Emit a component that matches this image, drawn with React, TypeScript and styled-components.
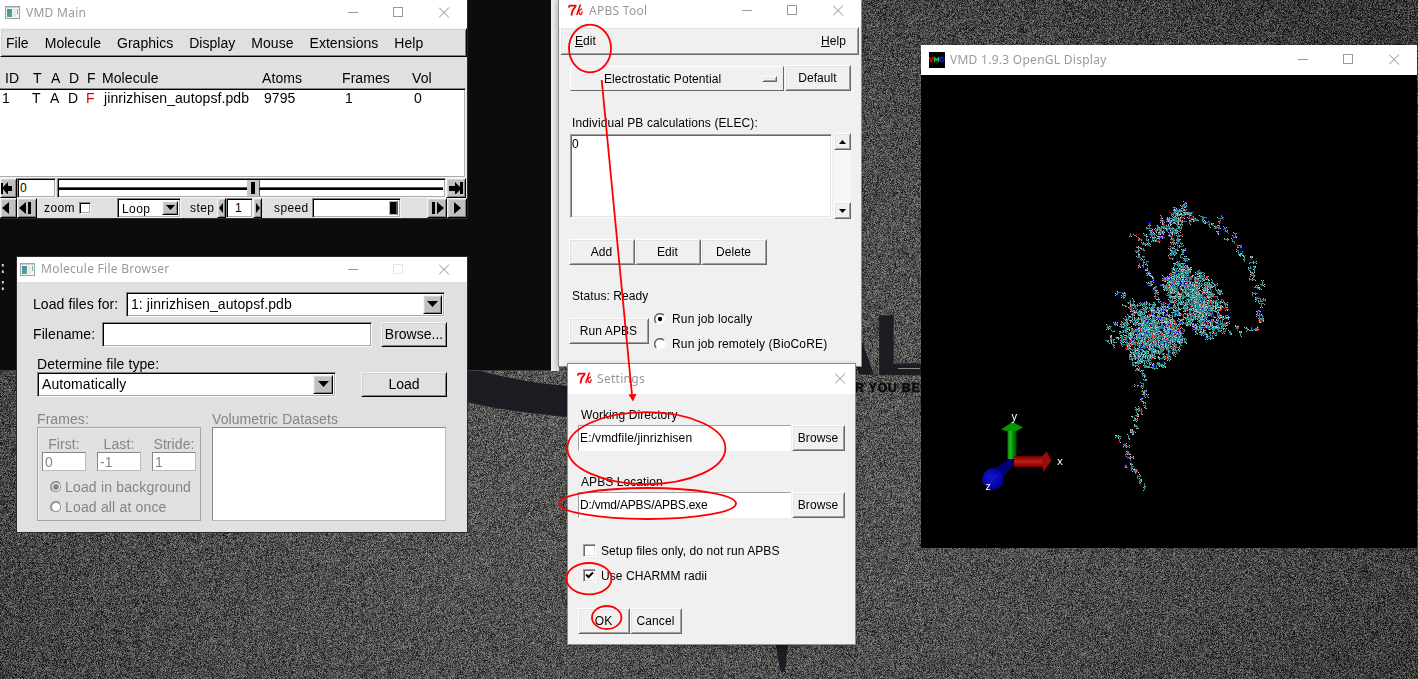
import React, { useLayoutEffect, useRef } from "react";
import styled, { createGlobalStyle, css } from "styled-components";

const GlobalStyle = createGlobalStyle`
  * { box-sizing: border-box; }
  body { margin: 0; background: #454545; overflow: hidden; }
`;

/* ---------- seeded random ---------- */
function makeRandom(seed: number) {
  let s = seed;
  return () => {
    s = (s + 0x6d2b79f5) | 0;
    let t = Math.imul(s ^ (s >>> 15), 1 | s);
    t = (t + Math.imul(t ^ (t >>> 7), 61 | t)) ^ t;
    return ((t ^ (t >>> 14)) >>> 0) / 4294967296;
  };
}

/* ---------- desktop ---------- */
const Desktop = styled.div`
  position: relative;
  width: 1418px;
  height: 679px;
  overflow: hidden;
  font-family: "Liberation Sans", Arial, sans-serif;
  color: #000;
  white-space: nowrap;
`;

const NoiseCanvas = styled.canvas`
  display: block;
`;

const WallpaperArt = styled.svg`
  position: absolute;
  inset: 0;
`;

const Console = styled.div`
  position: absolute;
  left: 0;
  top: 0;
  width: 551px;
  height: 371px;
  padding-top: 261px;
  background: #0c0c0c;
  border-bottom: 1px solid #3c3c3c;
  color: #d8d8d8;
  font: 16px/17px "Liberation Mono", monospace;
  text-indent: -2px;
`;

const BackWindowEdge = styled.div`
  position: absolute;
  left: 551px;
  top: 0;
  width: 8px;
  height: 371px;
  background: linear-gradient(90deg, #f0f0f0, #dedede);
`;

const Annotations = styled.svg`
  position: absolute;
  inset: 0;
  pointer-events: none;
`;

/* ---------- window chrome ---------- */
const Window = styled.section<{ $x: number; $y: number; $w: number; $h: number; $face: string }>`
  position: absolute;
  left: ${(p) => p.$x}px;
  top: ${(p) => p.$y}px;
  width: ${(p) => p.$w}px;
  height: ${(p) => p.$h}px;
  display: flex;
  flex-direction: column;
  background: ${(p) => p.$face};
`;

const FltkWindow = styled(Window)`
  font-size: 14px;
  line-height: 16px;
  letter-spacing: 0.08px;
  box-shadow: 0 0 0 1px #2b2b2b;
`;

const TkWindow = styled(Window)`
  font-size: 12px;
  line-height: 14px;
  letter-spacing: 0.08px;
  box-shadow: 0 0 0 1px #8f8f8f, 0 2px 7px rgba(0, 0, 0, 0.35);
`;

const TitleBar = styled.header<{ $h: number; $left: number; $lift?: number }>`
  flex: none;
  display: flex;
  align-items: center;
  height: ${(p) => p.$h}px;
  padding-left: ${(p) => p.$left}px;
  padding-bottom: ${(p) => p.$lift ?? 0}px;
  background: #fff;
`;

const Title = styled.h1<{ $ls?: number; $ml?: number }>`
  flex: 1;
  margin: 0 0 0 ${(p) => p.$ml ?? 6}px;
  font: 400 12px/16px "Noto Sans", "Open Sans", sans-serif;
  letter-spacing: ${(p) => p.$ls ?? 0.27}px;
  color: #999;
`;

const ControlButton = styled.span<{ $w?: number; $shift?: number }>`
  display: flex;
  justify-content: center;
  width: ${(p) => p.$w ?? 46}px;
  padding-left: ${(p) => p.$shift ?? 0}px;
`;

function Controls({ only, dimMax, closeW }: { only?: boolean; dimMax?: boolean; closeW?: number }) {
  return (
    <>
      {!only && (
        <ControlButton $shift={3}>
          <svg width="11" height="11"><path d="M0 5.500h10" stroke="#999" /></svg>
        </ControlButton>
      )}
      {!only && (
        <ControlButton $shift={1}>
          <svg width="11" height="11">
            <rect x=".5" y=".5" width="9" height="9" fill="none" stroke={dimMax ? "#e6e6e6" : "#999"} />
          </svg>
        </ControlButton>
      )}
      <ControlButton $w={closeW} $shift={closeW ? 0 : 1}>
        <svg width="11" height="11"><path d="M0 .5l10 10M10 .5l-10 10" stroke="#8c8c8c" fill="none" /></svg>
      </ControlButton>
    </>
  );
}

const AppIcon = () => (
  <svg width="15" height="13">
    <defs>
      <linearGradient id="appGlow" x1="0" y1="0" x2="0.4" y2="1">
        <stop offset="0" stopColor="#4f7fc0" />
        <stop offset="1" stopColor="#4fae78" />
      </linearGradient>
    </defs>
    <rect x=".5" y=".5" width="14" height="12" fill="#f2f4f5" stroke="#9aa3a8" />
    <path d="M1 1.5h13" stroke="#c7ced3" />
    <rect x="2" y="3" width="5" height="8" fill="url(#appGlow)" />
    <rect x="8" y="3" width="3" height="8" fill="#e4e8ea" />
    <rect x="12" y="3" width="1" height="5" fill="#7fae9d" />
  </svg>
);

const TkIcon = () => (
  <svg width="16" height="13" fill="none" stroke="#f00000">
    <path d="M.6 3.600L1.600 1.700H8.400" strokeWidth="1.700" />
    <path d="M7.800 2L4.600 6.500L3.400 11.500" strokeWidth="1.800" />
    <path d="M12.400 .6L8.800 11" strokeWidth="1.500" />
    <path d="M9.500 7.600L14 4.800M10 7.200c1.700 0 1 3.300 2.300 3.300s2.200-1.600 1.600-3.300" strokeWidth="1.300" />
  </svg>
);

const VmdIcon = () => (
  <svg width="16" height="16">
    <rect width="16" height="16" />
    <path d="M.5 5l1.500 4.500L4 5" stroke="#f00010" strokeWidth="1.300" fill="none" />
    <path d="M5.500 10V6l2 2 2-2v4" stroke="#00e020" strokeWidth="1.400" fill="none" />
    <path d="M11.500 5.500v4h1.800l1.500-1v-2l-1.500-1z" stroke="#1010e8" strokeWidth="1.300" fill="none" />
  </svg>
);

/* ---------- FLTK widgets ---------- */
const fltkDown = css`
  background: #fff;
  border: 1px solid;
  border-color: #848484 #f4f4f4 #f4f4f4 #848484;
  box-shadow: inset 1px 1px #000, inset -1px -1px #ababab;
`;
const fltkUp = css`
  border: 1px solid;
  border-color: #f4f4f4 #000 #000 #f4f4f4;
  box-shadow: inset 1px 1px #d2d2d2, inset -1px -1px #848484;
`;

const MainMenu = styled.nav`
  flex: none;
  display: flex;
  align-items: center;
  gap: 16px;
  width: 467px;
  height: 29px;
  padding: 0 0 0 5px;
  letter-spacing: 0.03px;
  ${fltkUp}
`;

const HeaderRow = styled.div`
  flex: none;
  display: grid;
  grid-template-columns: 28px 18px 18px 18px 15px 160px 80px 70px 1fr;
  align-items: end;
  height: 31px;
  padding: 0 0 2px 5px;
`;

const MoleculeList = styled.div`
  flex: none;
  width: 468px;
  height: 90px;
  margin-left: -2px;
  padding: 1px 0 0 3px;
  ${fltkDown}
`;

const MoleculeRow = styled.div`
  display: grid;
  grid-template-columns: 30px 18px 18px 18px 18px 160px 81px 69px 1fr;
`;

const FixedFlag = styled.span`
  color: #e00000;
`;

const PlayRow = styled.div`
  flex: none;
  display: flex;
  align-items: center;
  height: 20px;
  font-size: 12px;
  line-height: 14px;
  letter-spacing: 0.4px;
`;

const IconButton = styled.button<{ $w: number; $cut?: number }>`
  display: flex;
  align-items: center;
  justify-content: center;
  flex: none;
  width: ${(p) => p.$w}px;
  height: 20px;
  padding: 0 ${(p) => p.$cut ?? 0}px 0 0;
  background: #c0c0c0;
  ${fltkUp}
`;

const SmallInput = styled.div<{ $w: number; $pl: number }>`
  flex: none;
  width: ${(p) => p.$w}px;
  height: 20px;
  padding: 2px 0 0 ${(p) => p.$pl}px;
  ${fltkDown}
`;

const FrameSlider = styled.div`
  flex: none;
  display: flex;
  align-items: center;
  width: 389px;
  height: 20px;
  margin-left: 1px;
  padding: 0 2px 0 1px;
  ${fltkDown}
`;
const Track = styled.i<{ $w: number }>`
  width: ${(p) => p.$w}px;
  height: 3px;
  background: #000;
  border-top: 1px solid #555;
`;
const Knob = styled.i`
  width: 12px;
  height: 16px;
  background: #000;
  border: 3px solid #c8c8c8;
  border-width: 2px 4px 2px 4px;
  box-shadow: 1px 0 #555;
`;

const SpeedSlider = styled.div`
  flex: none;
  display: flex;
  justify-content: flex-end;
  width: 89px;
  height: 20px;
  margin-left: 3px;
  padding: 2px;
  ${fltkDown}
`;
const SpeedKnob = styled.i`
  width: 9px;
  background: #000;
  border: 1px solid #b8b8b8;
  border-right: 2px solid #555;
`;

const PlayLabel = styled.span<{ $w: number; $pl: number }>`
  flex: none;
  width: ${(p) => p.$w}px;
  padding-left: ${(p) => p.$pl}px;
`;

const ZoomBox = styled.i`
  width: 12px;
  height: 12px;
  margin-right: 26px;
  ${fltkDown}
`;

const Choice = styled.div<{ $w: number; $h: number }>`
  flex: none;
  display: flex;
  align-items: center;
  justify-content: space-between;
  width: ${(p) => p.$w}px;
  height: ${(p) => p.$h}px;
  padding: 2px 2px 2px 4px;
  ${fltkDown}
`;
const ChoiceText = styled.span`
  padding-bottom: 1px;
`;
const LoopText = styled.span`
  padding-top: 1px;
`;
const ChoiceArrow = styled.span<{ $w: number }>`
  display: flex;
  align-items: center;
  justify-content: center;
  align-self: stretch;
  width: ${(p) => p.$w}px;
  background: #c0c0c0;
  ${fltkUp}
`;
const Down = ({ s = 11 }: { s?: number }) => (
  <svg width={s} height={s / 2 + 1}><path d={`M0 0h${s}l-${s / 2} ${s / 2 + 0.5}z`} /></svg>
);

const BrowserBody = styled.div`
  display: flex;
  flex-direction: column;
  padding: 10px 0 0 16px;
`;
const BrowserRow = styled.div<{ $mb: number; $indent?: number }>`
  display: flex;
  align-items: center;
  height: 25px;
  margin-bottom: ${(p) => p.$mb}px;
  padding-left: ${(p) => p.$indent ?? 0}px;
`;
const FieldLabel = styled.label<{ $w: number }>`
  width: ${(p) => p.$w}px;
  padding-bottom: 2px;
`;
const FilenameInput = styled.div`
  width: 270px;
  height: 25px;
  ${fltkDown}
`;
const FltkButton = styled.button<{ $w: number; $ml: number }>`
  width: ${(p) => p.$w}px;
  height: 25px;
  margin: 0 0 0 ${(p) => p.$ml}px;
  padding: 0 0 2px;
  background: #e0e0e0;
  font: 14px/16px "Liberation Sans", Arial, sans-serif;
  text-align: center;
  ${fltkUp}
`;
const TypeLabel = styled.div`
  height: 16px;
  margin: -1px 0 0 4px;
`;

const DisabledArea = styled.div`
  display: flex;
  gap: 11px;
  margin: 14px 0 0 4px;
  color: #858585;
`;
const Labelled = styled.div`
  display: flex;
  flex-direction: column;
`;
const FramesGroup = styled.div`
  display: flex;
  flex-direction: column;
  width: 164px;
  height: 94px;
  padding: 8px 0 0 4px;
  border: 1px solid #a4a4a4;
  box-shadow: inset 1px 1px #f0f0f0;
`;
const RangeFields = styled.div`
  display: flex;
  gap: 11px;
  text-align: center;
`;
const RangeInput = styled.div`
  width: 44px;
  height: 19px;
  margin-bottom: 6px;
  padding: 1px 0 0 2px;
  background: #fff;
  border: 1px solid #bcbcbc;
  border-color: #858585 #bcbcbc #bcbcbc #858585;
  text-align: left;
`;
const FltkRadioRow = styled.div`
  display: flex;
  align-items: center;
  gap: 3px;
  height: 20px;
  padding-left: 8px;
  letter-spacing: 0.17px;
`;
const VolumeList = styled.div`
  width: 234px;
  height: 94px;
  background: #fff;
  border: 1px solid #bcbcbc;
  border-color: #858585 #bcbcbc #bcbcbc #858585;
`;

/* ---------- Tk widgets ---------- */
const tkUp = css`
  background: #f0f0f0;
  border: 1px solid;
  border-color: #fff #696969 #696969 #fff;
  box-shadow: inset 1px 1px #e3e3e3, inset -1px -1px #a0a0a0;
`;
const TkMenu = styled.nav`
  display: flex;
  justify-content: space-between;
  align-items: center;
  height: 28px;
  margin: 0 2px 0 1px;
  padding: 0 12px 0 14px;
  ${tkUp}
`;
const TkButton = styled.button<{ $w: number }>`
  flex: none;
  width: ${(p) => p.$w}px;
  height: 26px;
  padding: 0 1px 0 0;
  font: 12px/14px "Liberation Sans", Arial, sans-serif;
  letter-spacing: 0.08px;
  text-align: center;
  ${tkUp}
`;
const ToolBody = styled.div`
  display: flex;
  flex-direction: column;
  padding: 10px 0 0 10px;
`;
const OptionRow = styled.div`
  display: flex;
  align-items: flex-start;
  gap: 1px;
  margin-left: 1px;
`;
const OptionMenu = styled.div`
  display: flex;
  align-items: center;
  justify-content: space-between;
  width: 214px;
  height: 25px;
  margin-top: 1px;
  padding: 0 6px 0 33px;
  background: #f0f0f0;
  border: 1px solid;
  border-color: #fff #696969 #696969 #fff;
`;
const OptionMark = styled.i`
  width: 15px;
  height: 6px;
  ${tkUp}
`;
const CalcLabel = styled.div`
  margin: 25px 0 3px 3px;
  letter-spacing: 0.11px;
`;
const CalcArea = styled.div`
  display: flex;
  gap: 2px;
  margin-left: 1px;
`;
const CalcList = styled.div`
  width: 262px;
  height: 84px;
  margin-top: 1px;
  padding: 2px 0 0 1px;
  background: #fff;
  border: 1px solid;
  border-color: #a0a0a0 #fff #fff #a0a0a0;
  box-shadow: inset 1px 1px #696969, inset -1px -1px #e3e3e3;
`;
const ScrollBar = styled.div`
  display: flex;
  flex-direction: column;
  justify-content: space-between;
  width: 17px;
  height: 86px;
  background: #f6f6f6;
`;
const ScrollButton = styled.span`
  display: flex;
  align-items: center;
  justify-content: center;
  height: 17px;
  ${tkUp}
`;
const ActionRow = styled.div<{ $mt: number }>`
  display: flex;
  margin-top: ${(p) => p.$mt}px;
`;
const Status = styled.div`
  margin: 24px 0 0 3px;
`;
const RunArea = styled.div`
  display: flex;
  margin-top: 3px;
  gap: 5px;
`;
const RunButton = styled(TkButton)`
  margin: 12px 0 0 0;
`;
const RunOptions = styled.div`
  display: flex;
  flex-direction: column;
  letter-spacing: 0.15px;
`;
const TkOption = styled.label<{ $gap: number }>`
  display: flex;
  align-items: center;
  gap: ${(p) => p.$gap}px;
  height: 25px;
`;
const SettingsBody = styled.div`
  display: flex;
  flex-direction: column;
  padding: 14px 0 0 10px;
`;
const PathLabel = styled.div`
  margin: 0 0 3px 3px;
`;
const PathRow = styled.div<{ $mb: number }>`
  display: flex;
  gap: 1px;
  margin-bottom: ${(p) => p.$mb}px;
`;
const PathInput = styled.div<{ $ls?: number }>`
  width: 213px;
  height: 26px;
  padding: 5px 0 0 1px;
  background: #fff;
  border: 1px solid;
  border-color: #a0a0a0 #fff #fff #a0a0a0;
  letter-spacing: ${(p) => p.$ls ?? 0.13}px;
`;
const CheckBox = styled.i`
  display: flex;
  width: 13px;
  height: 13px;
  margin-left: 5px;
  background: #fff;
  border: 1px solid;
  border-color: #a0a0a0 #fff #fff #a0a0a0;
  box-shadow: inset 1px 1px #696969, inset -1px -1px #e3e3e3;
`;

function Radio({ on, dim }: { on?: boolean; dim?: boolean }) {
  return (
    <svg width="12" height="12">
      <circle cx="6" cy="6" r="5" fill="#fff" stroke="#fff" />
      <path d="M2.200 9.800A5.300 5.300 0 0 1 9.800 2.200" fill="none" stroke={dim ? "#999" : "#666"} strokeWidth="1.500" />
      {dim && <circle cx="6" cy="6" r="4.600" fill="none" stroke="#999" strokeWidth="1.200" />}
      {on && <circle cx="6" cy="6" r={dim ? 2.9 : 2.2} fill={dim ? "#858585" : "#000"} />}
    </svg>
  );
}

/* ---------- wallpaper ---------- */
function Wallpaper() {
  const ref = useRef<HTMLCanvasElement>(null);
  useLayoutEffect(() => {
    const ctx = ref.current?.getContext("2d");
    if (!ctx) return;
    const W = 1418;
    const H = 679;
    const rnd = makeRandom(7);
    const img = ctx.createImageData(W, H);
    for (let y = 0; y < H; y++) {
      for (let x = 0; x < W; x++) {
        const dx = (x - 640) / 900;
        const dy = (y - 420) / 620;
        const base = 85 - 30 * Math.min(1, dx * dx + dy * dy);
        const n = (rnd() + rnd() - 1) * 68;
        const v = Math.max(14, base + n);
        const i = (y * W + x) * 4;
        img.data[i] = v;
        img.data[i + 1] = v;
        img.data[i + 2] = v - 1;
        img.data[i + 3] = 255;
      }
    }
    ctx.putImageData(img, 0, 0);
  }, []);
  return (
    <>
      <NoiseCanvas ref={ref} width={1418} height={679} />
      <WallpaperArt width="1418" height="679">
        <path d="M467 371h14c30 8 60 13 88 15v31c-40-4-75-8-102-15z" fill="#1d1c23" />
        <path d="M775 640h14l-3 20-1 10q-3 4-5 0z" fill="#1d1c23" />
        <text x="814" y="374" fontSize="84" fontWeight="700" fill="#1d1c23" stroke="#1d1c23" strokeWidth="2.500">AL</text>
        <path d="M898 368.500h22" stroke="#8a8a86" />
        <text x="855" y="392" fontSize="12" fontWeight="700" letterSpacing="1" fill="#0c0c0e" stroke="#0c0c0e" strokeWidth=".6">R YOU BE</text>
      </WallpaperArt>
    </>
  );
}

/* ---------- molecule ---------- */
type Pt = [number, number];
const COLORS = ["#2f8c8c", "#b9b9b9", "#0808cc", "#cc0808", "#a8a810"];

function buildMolecule() {
  const rnd = makeRandom(42);
  const pixels = new Map<number, number>();
  const dot = (c: number, x: number, y: number, keep = 0) => {
    const key = Math.round(y) * 2000 + Math.round(x);
    if (pixels.has(key) && rnd() < keep) return;
    pixels.set(key, c);
  };
  const tip = () => {
    const r = rnd();
    return r < 0.66 ? 1 : r < 0.84 ? 2 : r < 0.993 ? 3 : 4;
  };
  const residue = (x: number, y: number, bonds: number) => {
    let cx = Math.round(x);
    let cy = Math.round(y);
    for (let i = 0; i < bonds; i++) {
      const dir = Math.floor(rnd() * 4);
      const dx = [1, -1, 0, 0][dir];
      const dy = [0, 0, 1, -1][dir];
      const len = 1 + Math.floor(rnd() * 3);
      for (let k = 0; k < len; k++) {
        dot(0, cx, cy);
        cx += dx;
        cy += dy;
      }
      dot(tip(), cx + dy, cy + dx, 0.25);
      if (rnd() < 0.45) dot(tip(), cx - dy, cy - dx, 0.25);
      if (rnd() < 0.35) {
        cx = Math.round(x);
        cy = Math.round(y);
      }
    }
  };
  const chain = (pts: Pt[], spread: number, step: number, bonds: number) => {
    for (let i = 0; i + 1 < pts.length; i++) {
      const [ax, ay] = pts[i];
      const [bx, by] = pts[i + 1];
      const n = Math.max(1, Math.round(Math.hypot(bx - ax, by - ay) / step));
      for (let k = 0; k < n; k++) {
        const t = k / n;
        residue(ax + (bx - ax) * t + (rnd() - 0.5) * spread, ay + (by - ay) * t + (rnd() - 0.5) * spread, bonds);
      }
    }
  };
  const blob = (cx: number, cy: number, rx: number, ry: number, rot: number, n: number) => {
    for (let i = 0; i < n; i++) {
      const a = rnd() * Math.PI * 2;
      const r = Math.pow(rnd(), 0.75);
      const px = Math.cos(a) * r * rx;
      const py = Math.sin(a) * r * ry;
      residue(cx + px * Math.cos(rot) - py * Math.sin(rot), cy + px * Math.sin(rot) + py * Math.cos(rot), 3);
    }
  };
  chain([[1183, 204], [1188, 212], [1193, 220], [1205, 220], [1214, 227], [1222, 232], [1233, 236], [1237, 245], [1241, 254], [1252, 265], [1250, 275], [1259, 283], [1254, 291], [1261, 303], [1257, 311], [1261, 319], [1255, 329], [1243, 331], [1230, 329], [1217, 325]], 7, 3, 3);
  chain([[1218, 227], [1220, 218], [1222, 212]], 1, 4, 2);
  chain([[1130, 233], [1138, 237], [1143, 240]], 1, 4, 2);
  chain([[1186, 204], [1176, 212], [1165, 222], [1155, 230], [1147, 236], [1141, 242], [1140, 256], [1146, 268], [1150, 278], [1155, 288], [1156, 298]], 6, 2.4, 3);
  chain([[1188, 210], [1168, 226], [1150, 236]], 14, 0.8, 3);
  chain([[1170, 222], [1175, 238], [1178, 252], [1180, 266], [1186, 274]], 12, 0.9, 3);
  chain([[1123, 294], [1128, 304], [1132, 312]], 7, 2, 3);
  chain([[1108, 330], [1117, 324], [1128, 327]], 7, 2.1, 3);
  chain([[1107, 338], [1117, 341], [1128, 342]], 7, 2.1, 3);
  chain([[1135, 363], [1140, 377], [1141, 388], [1145, 397], [1140, 406], [1134, 414], [1136, 424], [1132, 434], [1122, 440], [1127, 446], [1127, 458], [1133, 470], [1140, 478], [1144, 486]], 7, 2.6, 3);
  blob(1151, 334, 30, 33, 0, 480);
  blob(1151, 334, 16, 18, 0, 90);
  blob(1174, 334, 13, 18, 0, 70);
  blob(1196, 301, 39, 25, 0.95, 460);
  blob(1196, 300, 20, 13, 0.95, 60);
  blob(1172, 280, 12, 11, 0, 50);
  const layers = COLORS.map(() => "");
  pixels.forEach((c, key) => {
    layers[c] += `M${key % 2000} ${Math.floor(key / 2000)}h1v1h-1z`;
  });
  return layers;
}
const MOLECULE = buildMolecule();

const Scene = styled.svg`
  flex: none;
  display: block;
  background: #000;
`;

function GlScene() {
  return (
    <Scene width="496" height="473" viewBox="921 75 496 473" fontFamily="Noto Sans, sans-serif" fontSize="11" fill="#fff">
      <defs>
        <linearGradient id="axG" x1="0" x2="1" y1="0" y2="0">
          <stop offset="0" stopColor="#007c00" />
          <stop offset=".3" stopColor="#2fb42f" />
          <stop offset=".55" stopColor="#009a00" />
          <stop offset="1" stopColor="#004d00" />
        </linearGradient>
        <linearGradient id="axR" x1="0" x2="0" y1="0" y2="1">
          <stop offset="0" stopColor="#6d0000" />
          <stop offset=".5" stopColor="#c01c1c" />
          <stop offset="1" stopColor="#780000" />
        </linearGradient>
        <radialGradient id="axB" cx=".4" cy=".45" r=".6">
          <stop offset="0" stopColor="#1414cc" />
          <stop offset="1" stopColor="#00009c" />
        </radialGradient>
      </defs>
      <g shapeRendering="crispEdges">
        {MOLECULE.map((d, i) => (
          <path key={i} d={d} fill={COLORS[i]} />
        ))}
      </g>
      <path d="M1011 458l4 5-13 15-8-9z" fill="#000078" />
      <rect x="1007.500" y="430" width="9" height="29" fill="url(#axG)" />
      <path d="M1012.500 422L1023 427.500L1016 431H1007L1001 429.500z" fill="#009a00" />
      <rect x="1014" y="456" width="29" height="11" fill="url(#axR)" />
      <path d="M1046.500 451L1051.500 461L1043 472L1042 457z" fill="#980c0c" />
      <circle cx="993" cy="479" r="10.700" fill="url(#axB)" />
      <path d="M990 482l9-9" stroke="#2626d8" strokeWidth=".8" />
      <text x="1011.500" y="420">y</text>
      <text x="1057" y="465">x</text>
      <text x="985.500" y="490">z</text>
    </Scene>
  );
}

/* ---------- windows ---------- */
function VmdMain() {
  return (
    <FltkWindow $x={0} $y={0} $w={467} $h={218} $face="#e0e0e0">
      <TitleBar $h={28} $left={5} $lift={3}>
        <AppIcon />
        <Title>VMD Main</Title>
        <Controls />
      </TitleBar>
      <MainMenu>
        <span>File</span><span>Molecule</span><span>Graphics</span><span>Display</span>
        <span>Mouse</span><span>Extensions</span><span>Help</span>
      </MainMenu>
      <HeaderRow>
        <span>ID</span><span>T</span><span>A</span><span>D</span><span>F</span>
        <span>Molecule</span><span>Atoms</span><span>Frames</span><span>Vol</span>
      </HeaderRow>
      <MoleculeList>
        <MoleculeRow>
          <span>1</span><span>T</span><span>A</span><span>D</span><FixedFlag>F</FixedFlag>
          <span>jinrizhisen_autopsf.pdb</span><span>9795</span><span>1</span><span>0</span>
        </MoleculeRow>
      </MoleculeList>
      <PlayRow>
        <IconButton $w={17} $cut={4}>
          <svg width="14" height="12"><path d="M0 1h2v4l5-5v4h7v5H7v4L2 7v5H0z" /></svg>
        </IconButton>
        <SmallInput $w={39} $pl={2}>0</SmallInput>
        <FrameSlider>
          <Track $w={188} />
          <Knob />
          <Track $w={184} />
        </FrameSlider>
        <IconButton $w={20}>
          <svg width="14" height="12"><path d="M14 0h-3v5L6 0v4H0v5h6v4l5-5v4h3z" /></svg>
        </IconButton>
      </PlayRow>
      <PlayRow>
        <IconButton $w={17} $cut={5}><svg width="8" height="12"><path d="M7 0v12L0 6z" /></svg></IconButton>
        <IconButton $w={20} $cut={3}><svg width="13" height="12"><path d="M7 0v12L0 6zM9 0h3v12H9z" /></svg></IconButton>
        <PlayLabel $w={42} $pl={7}>zoom</PlayLabel>
        <ZoomBox />
        <Choice $w={64} $h={20}><LoopText>Loop</LoopText><ChoiceArrow $w={16}><Down s={9} /></ChoiceArrow></Choice>
        <PlayLabel $w={36} $pl={9}>step</PlayLabel>
        <IconButton $w={9}><svg width="5" height="10"><path d="M4 0v10L0 5z" /></svg></IconButton>
        <SmallInput $w={27} $pl={8}>1</SmallInput>
        <IconButton $w={9}><svg width="5" height="10"><path d="M1 0v10l4-5z" /></svg></IconButton>
        <PlayLabel $w={47} $pl={12}>speed</PlayLabel>
        <SpeedSlider><SpeedKnob /></SpeedSlider>
        <PlayLabel $w={26} $pl={0} />
        <IconButton $w={20}><svg width="13" height="12"><path d="M1 0h3v12H1zM6 0v12l7-6z" /></svg></IconButton>
        <IconButton $w={20}><svg width="9" height="12"><path d="M1 0v12l7-6z" /></svg></IconButton>
      </PlayRow>
    </FltkWindow>
  );
}

function FileBrowser() {
  return (
    <FltkWindow $x={17} $y={257} $w={450} $h={275} $face="#e0e0e0">
      <TitleBar $h={25} $left={3} $lift={1}>
        <AppIcon />
        <Title>Molecule File Browser</Title>
        <Controls dimMax />
      </TitleBar>
      <BrowserBody>
        <BrowserRow $mb={5}>
          <FieldLabel $w={93}>Load files for:</FieldLabel>
          <Choice $w={319} $h={25}><ChoiceText>1: jinrizhisen_autopsf.pdb</ChoiceText><ChoiceArrow $w={19}><Down /></ChoiceArrow></Choice>
        </BrowserRow>
        <BrowserRow $mb={10}>
          <FieldLabel $w={69}>Filename:</FieldLabel>
          <FilenameInput />
          <FltkButton $w={66} $ml={9}>Browse...</FltkButton>
        </BrowserRow>
        <TypeLabel>Determine file type:</TypeLabel>
        <BrowserRow $mb={0} $indent={4}>
          <Choice $w={299} $h={25}><ChoiceText>Automatically</ChoiceText><ChoiceArrow $w={20}><Down /></ChoiceArrow></Choice>
          <FltkButton $w={86} $ml={25}>Load</FltkButton>
        </BrowserRow>
        <DisabledArea>
          <Labelled>
            Frames:
            <FramesGroup>
              <RangeFields>
                <Labelled>First:<RangeInput>0</RangeInput></Labelled>
                <Labelled>Last:<RangeInput>-1</RangeInput></Labelled>
                <Labelled>Stride:<RangeInput>1</RangeInput></Labelled>
              </RangeFields>
              <FltkRadioRow><Radio on dim />Load in background</FltkRadioRow>
              <FltkRadioRow><Radio dim />Load all at once</FltkRadioRow>
            </FramesGroup>
          </Labelled>
          <Labelled>
            Volumetric Datasets
            <VolumeList />
          </Labelled>
        </DisabledArea>
      </BrowserBody>
    </FltkWindow>
  );
}

function ApbsTool() {
  return (
    <TkWindow $x={559} $y={0} $w={302} $h={366} $face="#f0f0f0">
      <TitleBar $h={27} $left={9} $lift={6}>
        <TkIcon />
        <Title $ml={5}>APBS Tool</Title>
        <Controls />
      </TitleBar>
      <TkMenu>
        <span><u>E</u>dit</span>
        <span><u>H</u>elp</span>
      </TkMenu>
      <ToolBody>
        <OptionRow>
          <OptionMenu>Electrostatic Potential<OptionMark /></OptionMenu>
          <TkButton $w={66}>Default</TkButton>
        </OptionRow>
        <CalcLabel>Individual PB calculations (ELEC):</CalcLabel>
        <CalcArea>
          <CalcList>0</CalcList>
          <ScrollBar>
            <ScrollButton><svg width="7" height="4"><path d="M0 4h7L3.500 0z" /></svg></ScrollButton>
            <ScrollButton><svg width="7" height="4"><path d="M0 0h7L3.500 4z" /></svg></ScrollButton>
          </ScrollBar>
        </CalcArea>
        <ActionRow $mt={20}>
          <TkButton $w={66}>Add</TkButton>
          <TkButton $w={66}>Edit</TkButton>
          <TkButton $w={66}>Delete</TkButton>
        </ActionRow>
        <Status>Status: Ready</Status>
        <RunArea>
          <RunButton $w={80}>Run APBS</RunButton>
          <RunOptions>
            <TkOption $gap={6}><Radio on />Run job locally</TkOption>
            <TkOption $gap={6}><Radio />Run job remotely (BioCoRE)</TkOption>
          </RunOptions>
        </RunArea>
      </ToolBody>
    </TkWindow>
  );
}

function Settings() {
  return (
    <TkWindow $x={568} $y={364} $w={287} $h={280} $face="#f0f0f0">
      <TitleBar $h={30} $left={9} $lift={1}>
        <TkIcon />
        <Title $ls={0.3} $ml={4}>Settings</Title>
        <Controls only closeW={30} />
      </TitleBar>
      <SettingsBody>
        <PathLabel>Working Directory</PathLabel>
        <PathRow $mb={24}>
          <PathInput>E:/vmdfile/jinrizhisen</PathInput>
          <TkButton $w={53}>Browse</TkButton>
        </PathRow>
        <PathLabel>APBS Location</PathLabel>
        <PathRow $mb={20}>
          <PathInput $ls={-0.2}>D:/vmd/APBS/APBS.exe</PathInput>
          <TkButton $w={53}>Browse</TkButton>
        </PathRow>
        <TkOption $gap={5}><CheckBox />Setup files only, do not run APBS</TkOption>
        <TkOption $gap={5}>
          <CheckBox>
            <svg width="11" height="11"><path d="M2 4.500l2.500 2.500L9 2.500" fill="none" stroke="#000" strokeWidth="2" /></svg>
          </CheckBox>
          Use CHARMM radii
        </TkOption>
        <ActionRow $mt={20}>
          <TkButton $w={52}>OK</TkButton>
          <TkButton $w={52}>Cancel</TkButton>
        </ActionRow>
      </SettingsBody>
    </TkWindow>
  );
}

function GlDisplay() {
  return (
    <Window $x={921} $y={45} $w={496} $h={503} $face="#000">
      <TitleBar $h={30} $left={8} $lift={1}>
        <VmdIcon />
        <Title $ml={5}>VMD 1.9.3 OpenGL Display</Title>
        <Controls />
      </TitleBar>
      <GlScene />
    </Window>
  );
}

export default function App() {
  return (
    <>
      <GlobalStyle />
      <Desktop>
        <Wallpaper />
        <Console>
          <div>:</div>
          <div>:</div>
        </Console>
        <BackWindowEdge />
        <VmdMain />
        <FileBrowser />
        <ApbsTool />
        <Settings />
        <GlDisplay />
        <Annotations width="1418" height="679" fill="none" stroke="#f00" strokeWidth="1.800">
          <ellipse cx="590" cy="48.500" rx="21" ry="23.800" />
          <ellipse cx="646.400" cy="448.200" rx="79" ry="36" />
          <ellipse cx="647.500" cy="503.500" rx="88.500" ry="15.500" />
          <ellipse cx="589" cy="578.700" rx="22.500" ry="15.700" />
          <ellipse cx="606.700" cy="617.500" rx="14.700" ry="11.500" />
          <path d="M601.700 80L632 395" />
          <path d="M628.500 394.500l8-.7-3.500 7.700z" fill="#f00" stroke="none" />
        </Annotations>
      </Desktop>
    </>
  );
}
